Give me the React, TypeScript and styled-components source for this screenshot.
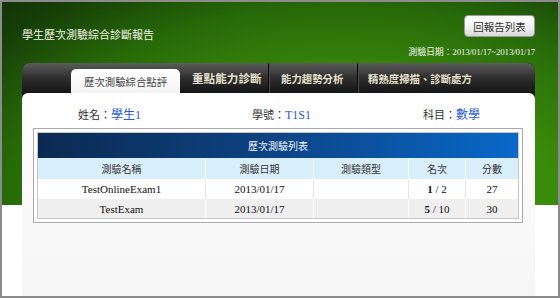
import styled, { createGlobalStyle } from "styled-components";

const GlobalStyle = createGlobalStyle`
  html, body {
    margin: 0;
    padding: 0;
    background: #fff;
  }
  body {
    font-family: "Liberation Serif", "Noto Sans CJK TC", serif;
  }
`;

const Frame = styled.div`
  box-sizing: border-box;
  width: 560px;
  height: 298px;
  border: 2px solid #8c8c8c;
  display: flex;
  flex-direction: column;
  overflow: hidden;
  background: radial-gradient(
        ellipse 95% 150% at 62% 100%,
        #4a9c10 0%,
        #3a8a0b 40%,
        #276a09 65%,
        #163e07 85%,
        #0e2a05 100%
      )
      top / 100% 203px no-repeat,
    #fff;
`;

const Header = styled.div`
  height: 61px;
  display: flex;
  justify-content: space-between;
  padding: 0 23px 0 20px;
`;

const Title = styled.div`
  padding-top: 25px;
  font-family: "Noto Sans CJK TC", sans-serif;
  font-size: 11px;
  line-height: 14px;
  color: #f2f4e6;
`;

const HeaderSide = styled.div`
  display: flex;
  flex-direction: column;
  align-items: flex-end;
  padding-top: 13px;
  gap: 9px;
`;

const BackButton = styled.button`
  box-sizing: border-box;
  height: 22px;
  width: 71px;
  padding: 0;
  border: 1px solid #9a9a9a;
  border-radius: 4px;
  background: linear-gradient(#ffffff, #f2f2f2 55%, #d8d8d8);
  font-family: "Noto Sans CJK TC", sans-serif;
  font-size: 10.5px;
  color: #333;
  cursor: pointer;
`;

const DateRange = styled.div`
  font-size: 9px;
  line-height: 12px;
  color: #f4f4f0;
  letter-spacing: -0.2px;
`;

const Card = styled.div`
  flex: 1;
  margin: 0 23px 0 20px;
  display: flex;
  flex-direction: column;
  background: #151515;
  border-radius: 8px 8px 0 0;
`;

const TabStrip = styled.div`
  height: 30px;
  display: flex;
  align-items: flex-end;
  padding-left: 49px;
  border-radius: 8px 8px 0 0;
  background: linear-gradient(#5c5c5c, #2e2e2e 50%, #151515);
`;

const ActiveTab = styled.div`
  box-sizing: border-box;
  width: 109px;
  height: 24px;
  padding-left: 13px;
  display: flex;
  align-items: center;
  border-radius: 5px 5px 0 0;
  background: linear-gradient(#ffffff, #f3f3f3);
  font-family: "Noto Sans CJK TC", sans-serif;
  font-size: 10.4px;
  color: #444;
`;

const Tab = styled.div<{ $w?: number; $pad: number; $big?: boolean; $divider?: boolean }>`
  box-sizing: border-box;
  height: 30px;
  width: ${(p) => (p.$w ? `${p.$w}px` : "auto")};
  padding-left: ${(p) => p.$pad}px;
  display: flex;
  align-items: center;
  font-family: "Noto Sans CJK TC", sans-serif;
  font-size: ${(p) => (p.$big ? "11.6px" : "10.4px")};
  font-weight: 700;
  color: #e6e0cc;
  border-left: ${(p) => (p.$divider ? "1px solid #0a0a0a" : "none")};
  box-shadow: ${(p) => (p.$divider ? "inset 1px 0 0 #4c4c4c" : "none")};
`;

const Panel = styled.div`
  flex: 1;
  padding: 0 12px 0 11px;
  border-radius: 6px 6px 0 0;
  background: linear-gradient(#ffffff, #fbfbfb 40%, #f6f6f6);
`;

const InfoRow = styled.div`
  display: grid;
  grid-template-columns: 174px 171px auto;
  padding: 14px 0 5px 45px;
  line-height: 16px;
`;

const InfoItem = styled.div`
  font-size: 11px;
  color: #333;
`;

const InfoValue = styled.span`
  font-size: 12px;
  color: #2a5bd8;
`;

const TableBox = styled.div`
  border: 1px solid #a9a9a9;
  padding: 3px;
  background: #fff;
`;

const TableInner = styled.div`
  border: 1px solid #c6c6c6;
`;

const Caption = styled.div`
  height: 25px;
  display: flex;
  align-items: center;
  justify-content: center;
  background: linear-gradient(90deg, #0b2a52, #0c4180 45%, #0968c9);
  font-family: "Noto Sans CJK TC", sans-serif;
  font-size: 10px;
  color: #f2f6ff;
`;

const Row = styled.div<{ $bg: string; $line: string; $h: number }>`
  display: grid;
  grid-template-columns: 167px 108px 95px 57px 53px;
  height: ${(p) => p.$h}px;
  background: ${(p) => p.$bg};

  & > div + div {
    border-left: 1px solid ${(p) => p.$line};
  }
`;

const HeadCell = styled.div`
  display: flex;
  align-items: center;
  justify-content: center;
  font-family: "Noto Sans CJK TC", sans-serif;
  font-size: 10px;
  color: #333;
`;

const Cell = styled.div`
  display: flex;
  align-items: center;
  justify-content: center;
  font-size: 11px;
  color: #111;
`;

const exams = [
  { name: "TestOnlineExam1", date: "2013/01/17", type: "", rank: 1, total: 2, score: 27 },
  { name: "TestExam", date: "2013/01/17", type: "", rank: 5, total: 10, score: 30 },
];

export default function App() {
  return (
    <>
      <GlobalStyle />
      <Frame>
        <Header>
          <Title>學生歷次測驗綜合診斷報告</Title>
          <HeaderSide>
            <BackButton>回報告列表</BackButton>
            <DateRange>測驗日期：2013/01/17~2013/01/17</DateRange>
          </HeaderSide>
        </Header>
        <Card>
          <TabStrip>
            <ActiveTab>歷次測驗綜合點評</ActiveTab>
            <Tab $w={88} $pad={12} $big>
              重點能力診斷
            </Tab>
            <Tab $w={89} $pad={12} $divider>
              能力趨勢分析
            </Tab>
            <Tab $pad={10} $divider>
              精熟度掃描、診斷處方
            </Tab>
          </TabStrip>
          <Panel>
            <InfoRow>
              <InfoItem>
                姓名：<InfoValue>學生1</InfoValue>
              </InfoItem>
              <InfoItem>
                學號：<InfoValue>T1S1</InfoValue>
              </InfoItem>
              <InfoItem>
                科目：<InfoValue>數學</InfoValue>
              </InfoItem>
            </InfoRow>
            <TableBox>
              <TableInner>
                <Caption>歷次測驗列表</Caption>
                <Row $bg="#d9eefb" $line="#ffffff" $h={21}>
                  <HeadCell>測驗名稱</HeadCell>
                  <HeadCell>測驗日期</HeadCell>
                  <HeadCell>測驗類型</HeadCell>
                  <HeadCell>名次</HeadCell>
                  <HeadCell>分數</HeadCell>
                </Row>
                {exams.map((e, i) => (
                  <Row
                    key={e.name}
                    $bg={i % 2 ? "#efefef" : "#ffffff"}
                    $line={i % 2 ? "#ffffff" : "#e6e6e6"}
                    $h={i % 2 ? 19 : 20}
                  >
                    <Cell>{e.name}</Cell>
                    <Cell>{e.date}</Cell>
                    <Cell>{e.type}</Cell>
                    <Cell>
                      <b>{e.rank}</b>&nbsp;/ {e.total}
                    </Cell>
                    <Cell>{e.score}</Cell>
                  </Row>
                ))}
              </TableInner>
            </TableBox>
          </Panel>
        </Card>
      </Frame>
    </>
  );
}
